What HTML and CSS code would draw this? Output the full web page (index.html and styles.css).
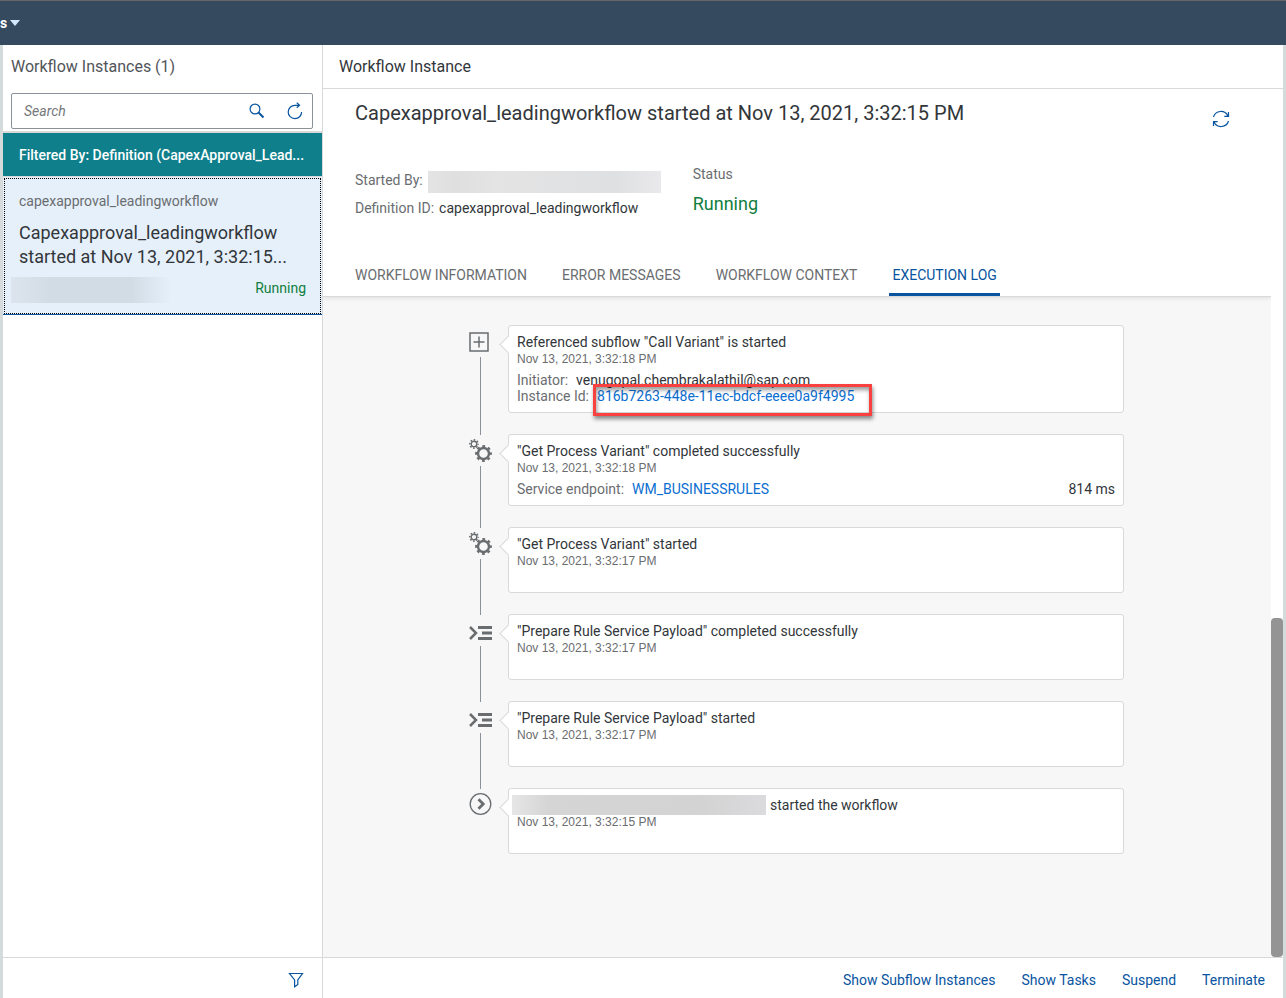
FILE: index.html
```
<!DOCTYPE html>
<html lang="en">
<head>
<meta charset="utf-8">
<title>Workflow Instances</title>
<link rel="stylesheet" href="styles.css">
</head>
<body>
<svg class="defs" aria-hidden="true">
  <symbol id="gears" viewBox="0 0 24 24">
    <g fill="none" stroke="currentColor">
      <circle cx="15.500" cy="15.500" r="5.500" stroke-width="2.400"/>
      <circle cx="15.500" cy="15.500" r="7.300" stroke-width="2.200" stroke-dasharray="2.800 2.933" stroke-dashoffset="1.400"/>
      <circle cx="6" cy="6" r="2.800" stroke-width="1.400"/>
      <circle cx="6" cy="6" r="4.100" stroke-width="1.600" stroke-dasharray="1.600 1.620" stroke-dashoffset="0.800"/>
    </g>
  </symbol>
  <symbol id="script" viewBox="0 0 24 24">
    <path d="M2 9l6 6-6 6" fill="none" stroke="currentColor" stroke-width="2.500"/>
    <path d="M10 8h14v3H10zM14 13.500h10v3H14zM10 19h14v3H10z" fill="currentColor"/>
  </symbol>
</svg>
<div class="app">
  <header class="shell">
    <button class="shell-menu" type="button" aria-label="Switch application">s<span class="caret"></span></button>
  </header>
  <div class="columns">
    <aside class="master">
      <h2 class="master-title">Workflow Instances (1)</h2>
      <form class="search">
        <input class="search-input" type="search" placeholder="Search" aria-label="Search">
        <button class="icon-button" type="button" aria-label="Search">
          <svg width="16" height="16" viewBox="0 0 16 16" fill="none" stroke="currentColor"><circle cx="6" cy="6" r="4.900" stroke-width="1.200"/><path d="M9.500 9.500l5 5" stroke-width="2"/></svg>
        </button>
        <button class="icon-button" type="button" aria-label="Refresh">
          <svg width="16" height="18" viewBox="0 0 16 18" fill="none" stroke="currentColor" stroke-width="1.200"><path d="M14.600 10A6.700 6.700 0 1 1 8 3.300h4.500M9.800.8l2.700 2.500-2.700 2.500"/></svg>
        </button>
      </form>
      <div class="filter-bar">Filtered By: Definition (CapexApproval_Lead...</div>
      <article class="item" tabindex="0">
        <p class="item-id">capexapproval_leadingworkflow</p>
        <h3 class="item-title">Capexapproval_leadingworkflow started at Nov 13, 2021, 3:32:15...</h3>
        <div class="item-foot"><span class="redacted redacted-item"></span><span class="running">Running</span></div>
      </article>
      <footer class="master-footer">
        <button class="icon-button" type="button" aria-label="Filter">
          <svg width="16" height="16" viewBox="0 0 16 16" fill="none" stroke="currentColor" stroke-width="1.200"><path d="M1.500 1.500h13L9.800 8v4.500L6.600 14.800V8z"/></svg>
        </button>
      </footer>
    </aside>
    <main class="detail">
      <h2 class="detail-bar">Workflow Instance</h2>
      <div class="scroll">
        <div class="page">
          <section class="summary">
            <div class="title-row">
              <h1 class="title">Capexapproval_leadingworkflow started at Nov 13, 2021, 3:32:15 PM</h1>
              <button class="icon-button" type="button" aria-label="Refresh instance">
                <svg width="18" height="18" viewBox="0 0 18 18" fill="none" stroke="currentColor" stroke-width="1.200"><path d="M1.500 7A7.700 7.700 0 0 1 15.800 5.800M16.500 2v4.400h-4.200M16.500 11A7.700 7.700 0 0 1 2.200 12.200M1.500 16v-4.400h4.200"/></svg>
              </button>
            </div>
            <div class="facts">
              <div class="fact-column">
                <p class="fact"><span>Started By:</span><span class="redacted redacted-user"></span></p>
                <p class="fact"><span>Definition ID:</span><span class="value">capexapproval_leadingworkflow</span></p>
              </div>
              <div class="status">
                <p>Status</p>
                <p class="status-value">Running</p>
              </div>
            </div>
            <nav class="tabs">
              <button class="tab" type="button">WORKFLOW INFORMATION</button>
              <button class="tab" type="button">ERROR MESSAGES</button>
              <button class="tab" type="button">WORKFLOW CONTEXT</button>
              <button class="tab tab-active" type="button">EXECUTION LOG</button>
            </nav>
          </section>
          <ol class="log">
            <li class="entry">
              <div class="rail"><svg class="rail-icon" viewBox="0 0 24 24" fill="none" stroke="currentColor" stroke-width="1.500"><path d="M2 4h18v18H2zM11 7.500v11M5.500 13h11"/></svg></div>
              <div class="card">
                <h3 class="card-title">Referenced subflow "Call Variant" is started</h3>
                <time class="card-time">Nov 13, 2021, 3:32:18 PM</time>
                <div class="card-body">
                  <p class="pair"><span class="label">Initiator:</span><span>venugopal.chembrakalathil@sap.com</span></p>
                  <p class="pair"><span class="label">Instance Id:</span><span class="marked"><a class="link" href="#instance">816b7263-448e-11ec-bdcf-eeee0a9f4995</a></span></p>
                </div>
              </div>
            </li>
            <li class="entry">
              <div class="rail"><svg class="rail-icon"><use href="#gears"/></svg></div>
              <div class="card">
                <h3 class="card-title">"Get Process Variant" completed successfully</h3>
                <time class="card-time">Nov 13, 2021, 3:32:18 PM</time>
                <div class="card-body">
                  <p class="pair"><span class="label">Service endpoint:</span><a class="link" href="#endpoint">WM_BUSINESSRULES</a><span class="duration">814 ms</span></p>
                </div>
              </div>
            </li>
            <li class="entry">
              <div class="rail"><svg class="rail-icon"><use href="#gears"/></svg></div>
              <div class="card">
                <h3 class="card-title">"Get Process Variant" started</h3>
                <time class="card-time">Nov 13, 2021, 3:32:17 PM</time>
              </div>
            </li>
            <li class="entry">
              <div class="rail"><svg class="rail-icon"><use href="#script"/></svg></div>
              <div class="card">
                <h3 class="card-title">"Prepare Rule Service Payload" completed successfully</h3>
                <time class="card-time">Nov 13, 2021, 3:32:17 PM</time>
              </div>
            </li>
            <li class="entry">
              <div class="rail"><svg class="rail-icon"><use href="#script"/></svg></div>
              <div class="card">
                <h3 class="card-title">"Prepare Rule Service Payload" started</h3>
                <time class="card-time">Nov 13, 2021, 3:32:17 PM</time>
              </div>
            </li>
            <li class="entry">
              <div class="rail"><svg class="rail-icon" viewBox="0 0 24 24" fill="none" stroke="currentColor"><circle cx="12.500" cy="12" r="10.300" stroke-width="1.300"/><path d="M10.500 7.300l4.700 4.700-4.700 4.700" stroke-width="2.800"/></svg></div>
              <div class="card">
                <h3 class="card-title"><span class="redacted redacted-starter"></span>started the workflow</h3>
                <time class="card-time">Nov 13, 2021, 3:32:15 PM</time>
              </div>
            </li>
          </ol>
        </div>
        <div class="track"><div class="thumb"></div></div>
      </div>
      <footer class="actions">
        <button class="action" type="button">Show Subflow Instances</button>
        <button class="action" type="button">Show Tasks</button>
        <button class="action" type="button">Suspend</button>
        <button class="action" type="button">Terminate</button>
      </footer>
    </main>
  </div>
</div>
</body>
</html>
```
FILE: styles.css
```
* { box-sizing: border-box; }
body, h1, h2, h3, p, ol { margin: 0; padding: 0; font-weight: 400; }
body { font: 14px/18px Roboto, "Liberation Sans", sans-serif; color: #32363a; }
button { font: inherit; color: #0854a0; background: none; border: 0; padding: 0; cursor: pointer; }
svg { display: block; flex: none; }
.defs { position: absolute; width: 0; height: 0; }

.app { display: flex; flex-direction: column; height: 100vh; overflow: hidden; }
.shell { flex: none; display: flex; align-items: center; height: 45px; background: #354a5f; border-top: 1px solid #666; }
.shell-menu { display: flex; align-items: center; gap: 3px; color: #fff; font-weight: 700; }
.caret { border: 5px solid transparent; border-top: 6px solid #d1e8ff; border-bottom: 0; }
.columns { flex: 1; display: flex; min-height: 0; border: solid #d5dada; border-width: 0 3px; }

.master { flex: none; width: 320px; display: flex; flex-direction: column; border-right: 1px solid #d9d9d9; background: #fff; }
.master-title { height: 44px; padding: 0 8px; font-size: 16px; line-height: 44px; color: #515559; }
.search { display: flex; align-items: center; height: 36px; margin: 4px 9px 2px 8px; border: 1px solid #89919a; border-radius: 2px; }
.search-input { flex: 1; min-width: 0; height: 100%; padding: 0 12px; border: 0; outline: 0; background: none; font: inherit; }
.search-input::placeholder { font-style: italic; color: #74777a; opacity: 1; }
.icon-button { display: flex; align-items: center; justify-content: center; width: 38px; height: 34px; }
.search .icon-button { padding-left: 4px; }
.filter-bar { flex: none; height: 46px; padding: 0 16px; border: solid #d9d9d9; border-width: 2px 0 1px; background: #107f8c; color: #fff; line-height: 44px; font-weight: 500; white-space: nowrap; }
.item { height: 138px; padding: 14px 16px; border-bottom: 1px solid #0854a0; background: #e5f0fa; outline: 1px dotted #000; outline-offset: -2px; }
.item-id { line-height: 20px; color: #6a6d70; }
.item-title { margin: 10px 0 8px; font-size: 18px; line-height: 24px; }
.item-foot { display: flex; align-items: center; justify-content: space-between; margin-left: -8px; }
.running, .status-value { color: #107e3e; }
.running { padding-bottom: 4px; }
.redacted { display: block; }
.redacted-item { width: 160px; height: 26px; background: linear-gradient(90deg, #dce5ed, #d2dce5 25%, #d2dce5 75%, #e5f0fa); }
.master-footer { display: flex; justify-content: flex-end; align-items: center; height: 41px; margin-top: auto; padding: 4px 7px 0 0; border-top: 1px solid #d9d9d9; }

.detail { flex: 1; min-width: 0; display: flex; flex-direction: column; }
.detail-bar { flex: none; height: 44px; padding: 0 16px; border-bottom: 1px solid #d9d9d9; font-size: 16px; line-height: 44px; }
.scroll { flex: 1; display: flex; min-height: 0; }
.page { flex: 1; min-width: 0; overflow: hidden; background: #f7f7f7; }
.summary { padding: 11px 32px 0; background: #fff; border-bottom: 1px solid #d9d9d9; box-shadow: 0 2px 4px rgba(0, 0, 0, .08); }
.title-row { display: flex; align-items: flex-start; justify-content: space-between; }
.title { font-size: 20px; line-height: 26px; }
.title-row .icon-button { width: 36px; height: 38px; }
.facts { display: flex; align-items: flex-start; gap: 32px; margin-top: 27px; color: #6a6d70; }
.fact-column { padding-top: 1px; }
.fact { display: flex; align-items: center; gap: 5px; height: 28px; }
.value { color: #32363a; }
.redacted-user { width: 233px; height: 22px; margin-top: 4px; background: linear-gradient(90deg, #e4e4e5, #dfdfe0 12%, #e4e4e5 30%, #dfe0e1 80%, #e9e9eb); }
.status-value { margin-top: 10px; font-size: 18px; line-height: 22px; }
.tabs { display: flex; gap: 29px; margin: 27px -3px 0; }
.tab { height: 47px; padding: 8px 3px 0; color: #6a6d70; border-bottom: 3px solid transparent; }
.tab-active { color: #0854a0; border-bottom-color: #0854a0; }

.log { display: flex; flex-direction: column; gap: 21px; max-width: 658px; margin: 28px auto 0; padding-right: 2px; list-style: none; }
.entry { display: flex; gap: 16px; }
.rail { position: relative; width: 24px; color: #6a6d70; }
.rail-icon { width: 24px; height: 24px; margin-top: 4px; }
.entry:not(:last-child) .rail::after { content: ""; position: absolute; top: 32px; bottom: -22px; left: 12px; width: 1px; background: #89919a; }
.card { position: relative; flex: 1; min-width: 0; min-height: 66px; padding: 7px 8px; border: 1px solid #d9d9d9; border-radius: 3px; background: #fff; }
.card::before { content: ""; position: absolute; left: -7px; top: 12px; width: 12px; height: 12px; transform: rotate(45deg); border: solid #d9d9d9; border-width: 0 0 1px 1px; background: #fff; }
.card-title { display: flex; align-items: center; height: 18px; font-size: 14px; }
.card-time { display: block; font: 12px/16px "Liberation Sans", sans-serif; color: #6a6d70; }
.card-body { padding: 5px 0 1px; }
.pair { display: flex; gap: 8px; line-height: 16px; }
.label { color: #6a6d70; }
.link { color: #0a6ed1; text-decoration: none; }
.duration { margin-left: auto; }
.marked { position: relative; }
.marked::after { content: ""; position: absolute; top: -4px; left: -4px; right: -18px; bottom: -12px; border: 3px solid #f9423f; box-shadow: 1px 3px 4px rgba(0, 0, 0, .45), inset 1px 3px 4px rgba(0, 0, 0, .4); }
.redacted-starter { position: relative; width: 254px; height: 20px; margin: 0 4px 0 -5px; background: linear-gradient(90deg, #e6e6e6, #d5d5d5 14%, #d3d3d3 75%, #dbdbde); }
.track { display: flex; flex-direction: column; justify-content: flex-end; width: 12px; background: #fff; }
.thumb { height: 39%; border-radius: 4px; background: #949494; }
.actions { flex: none; display: flex; align-items: center; justify-content: flex-end; gap: 26px; height: 41px; padding: 4px 18px 0; border-top: 1px solid #d9d9d9; }
```
